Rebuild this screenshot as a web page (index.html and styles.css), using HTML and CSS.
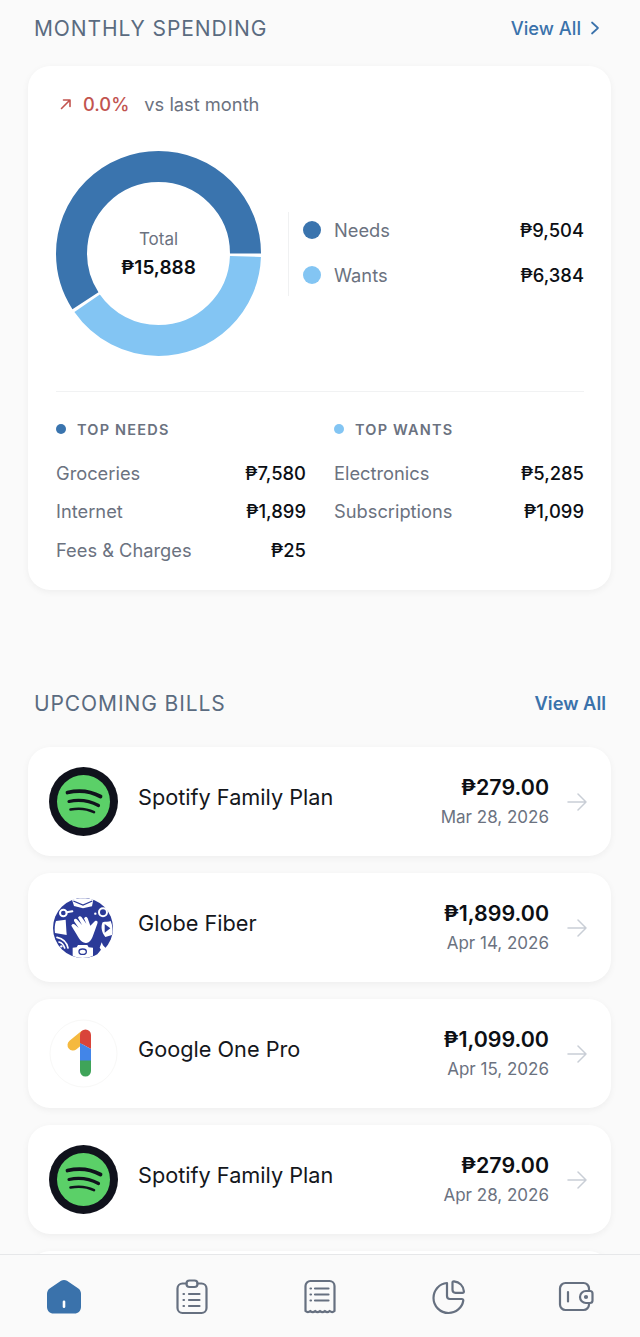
FILE: index.html
```html
<!DOCTYPE html>
<html lang="en">
<head>
  <meta charset="UTF-8">
  <meta name="viewport" content="width=device-width, initial-scale=1.0">
  <title>Dashboard</title>
  <link rel="stylesheet" href="styles.css">
</head>
<body>

<main class="page">
  <!-- Monthly spending -->
  <div class="section-head spending-head">
    <h2>MONTHLY SPENDING</h2>
    <a class="view-all" href="#">View All
      <svg class="chevron" viewBox="0 0 10 16" width="10" height="16"><path d="M2 2.5 8 8l-6 5.5" fill="none" stroke="#3a72ab" stroke-width="1.7" stroke-linecap="round" stroke-linejoin="round"/></svg>
    </a>
  </div>

  <section class="card spending-card">
    <div class="trend">
      <svg viewBox="0 0 14 14" width="14" height="14"><path d="M2.5 11.5 11 3M4.500 3H11v6.500" fill="none" stroke="#c2544f" stroke-width="1.6" stroke-linecap="round" stroke-linejoin="round"/></svg>
      <span class="trend-value">0.0%</span>
      <span class="trend-label">vs last month</span>
    </div>

    <div class="chart-row">
      <div class="donut">
        <!-- circumference 546.6, needs 59.8% / wants 40.2% -->
        <svg viewBox="0 0 205 205" width="205" height="205" fill="none" stroke-width="31">
          <circle cx="102.5" cy="102.5" r="87" stroke="#83c5f3" stroke-dasharray="217 329.6" stroke-dashoffset="-3"/>
          <circle cx="102.5" cy="102.5" r="87" stroke="#3a74ae" stroke-dasharray="323.6 223" stroke-dashoffset="-223"/>
        </svg>
        <div class="donut-center">
          <span class="donut-label">Total</span>
          <strong class="donut-total">₱15,888</strong>
        </div>
      </div>

      <div class="legend">
        <div class="legend-item">
          <span class="dot dot-needs"></span>
          <span class="legend-name">Needs</span>
          <span class="amount">₱9,504</span>
        </div>
        <div class="legend-item">
          <span class="dot dot-wants"></span>
          <span class="legend-name">Wants</span>
          <span class="amount">₱6,384</span>
        </div>
      </div>
    </div>

    <hr class="divider">

    <div class="top-grid">
      <div>
        <h3 class="top-title"><span class="mini-dot dot-needs"></span>TOP NEEDS</h3>
        <div class="top-row"><span>Groceries</span><span class="amount">₱7,580</span></div>
        <div class="top-row"><span>Internet</span><span class="amount">₱1,899</span></div>
        <div class="top-row"><span>Fees &amp; Charges</span><span class="amount">₱25</span></div>
      </div>
      <div>
        <h3 class="top-title"><span class="mini-dot dot-wants"></span>TOP WANTS</h3>
        <div class="top-row"><span>Electronics</span><span class="amount">₱5,285</span></div>
        <div class="top-row"><span>Subscriptions</span><span class="amount">₱1,099</span></div>
      </div>
    </div>
  </section>

  <!-- Upcoming bills -->
  <div class="section-head bills-head">
    <h2>UPCOMING BILLS</h2>
    <a class="view-all view-all-bold" href="#">View All</a>
  </div>

  <div class="bill-list">
    <div class="card bill">
      <svg class="bill-logo" viewBox="0 0 69 69"><circle cx="34.5" cy="34.5" r="34.5" fill="#10121c"/><circle cx="34.5" cy="34.5" r="26.5" fill="#5bd068"/><g fill="none" stroke="#10121c" stroke-linecap="round"><path d="M18.5 25.5c11-2.5 23-1.5 33 4" stroke-width="3.8"/><path d="M20 34.500c9.500-2 20-1 29.500 4" stroke-width="3.2"/><path d="M21.500 42.500c8-1.500 16.500-.8 23.500 2.700" stroke-width="2.6"/></g></svg>
      <span class="bill-name">Spotify Family Plan</span>
      <div class="bill-info"><strong>₱279.00</strong><span>Mar 28, 2026</span></div>
      <svg class="bill-arrow" viewBox="0 0 20 20" width="20" height="20"><path d="M1 10h18M11 2l8 8-8 8" fill="none" stroke="#c9ced6" stroke-width="1.5" stroke-linecap="round" stroke-linejoin="round"/></svg>
    </div>

    <div class="card bill">
      <svg class="bill-logo" viewBox="3 0 207 207">
        <circle cx="105" cy="105" r="90" fill="#2b3a98"/>
        <!-- envelope -->
        <path d="M72 20c20-6 44-6 64 0l-4 20-27 6-27-7Z" fill="#fff"/>
        <path d="M76 24l29 12 28-12" fill="none" stroke="#2b3a98" stroke-width="4"/>
        <!-- key and speech bubble -->
        <circle cx="46" cy="60" r="10" fill="none" stroke="#fff" stroke-width="6"/>
        <path d="M56 58l17-3" stroke="#fff" stroke-width="6" stroke-linecap="round"/>
        <circle cx="165" cy="58" r="12" fill="none" stroke="#fff" stroke-width="6"/>
        <circle cx="142" cy="62" r="3.5" fill="#fff"/>
        <!-- left panel -->
        <path d="M24 84l29-4 3 46-35-6c-2-12-1-25 3-36Z" fill="#fff"/>
        <!-- hand -->
        <path d="M70 98c2-6 8-6 12-2l10 9-14-21c-1-8 6-8 10-4l14 16-12-22c4-6 8-5 11-1l14 19-7-16c4-6 8-6 11 0l8 22 14-14c8-2 9 3 7 8l-12 33c-7 23-18 25-23 25-16-2-22-18-26-24Z" fill="#fff"/>
        <!-- play button -->
        <path d="M164 88c8-3 18-1 24-4 6 14 7 28 4 42l-20 6c-12-14-14-32-8-44Z" fill="#fff"/>
        <path d="M170 93v26l17-13Z" fill="#2b3a98"/>
        <!-- wifi -->
        <path d="M27 133c15 3 29 14 33 32M33 147c8 2 14 8 17 18" fill="none" stroke="#fff" stroke-width="5" stroke-linecap="round"/>
        <circle cx="40" cy="160" r="3.5" fill="#fff"/>
        <!-- camera -->
        <path d="M74 164l12-1 4-7h28l4 7 13 1v24c-20 9-42 9-61 0Z" fill="#fff"/>
        <ellipse cx="104" cy="176" rx="11" ry="8" fill="none" stroke="#2b3a98" stroke-width="4"/>
        <!-- hanger -->
        <path d="M161 148l4 9 13 13-15 12-15 2 11-14-4-6Z" fill="#fff"/>
      </svg>
      <span class="bill-name">Globe Fiber</span>
      <div class="bill-info"><strong>₱1,899.00</strong><span>Apr 14, 2026</span></div>
      <svg class="bill-arrow" viewBox="0 0 20 20" width="20" height="20"><path d="M1 10h18M11 2l8 8-8 8" fill="none" stroke="#c9ced6" stroke-width="1.5" stroke-linecap="round" stroke-linejoin="round"/></svg>
    </div>

    <div class="card bill">
      <svg class="bill-logo" viewBox="0 0 69 69">
        <circle cx="34.5" cy="34.5" r="33.5" fill="#fff" stroke="#f8f8f7"/>
        <path d="M24 26 35 17" fill="none" stroke="#f5b93f" stroke-width="11" stroke-linecap="round"/>
        <path d="M31 16a5.5 5.5 0 0 1 11 0v14L31 24Z" fill="#d9443a"/>
        <path d="M31 24l11 6v12H31Z" fill="#4285e8"/>
        <path d="M31 41.5h11V52a5.5 5.5 0 0 1-11 0Z" fill="#3fa459"/>
      </svg>
      <span class="bill-name">Google One Pro</span>
      <div class="bill-info"><strong>₱1,099.00</strong><span>Apr 15, 2026</span></div>
      <svg class="bill-arrow" viewBox="0 0 20 20" width="20" height="20"><path d="M1 10h18M11 2l8 8-8 8" fill="none" stroke="#c9ced6" stroke-width="1.5" stroke-linecap="round" stroke-linejoin="round"/></svg>
    </div>

    <div class="card bill">
      <svg class="bill-logo" viewBox="0 0 69 69"><circle cx="34.5" cy="34.5" r="34.5" fill="#10121c"/><circle cx="34.5" cy="34.5" r="26.5" fill="#5bd068"/><g fill="none" stroke="#10121c" stroke-linecap="round"><path d="M18.5 25.5c11-2.5 23-1.5 33 4" stroke-width="3.8"/><path d="M20 34.500c9.500-2 20-1 29.500 4" stroke-width="3.2"/><path d="M21.500 42.500c8-1.500 16.500-.8 23.500 2.700" stroke-width="2.6"/></g></svg>
      <span class="bill-name">Spotify Family Plan</span>
      <div class="bill-info"><strong>₱279.00</strong><span>Apr 28, 2026</span></div>
      <svg class="bill-arrow" viewBox="0 0 20 20" width="20" height="20"><path d="M1 10h18M11 2l8 8-8 8" fill="none" stroke="#c9ced6" stroke-width="1.5" stroke-linecap="round" stroke-linejoin="round"/></svg>
    </div>

    <!-- next bill is cut off behind the nav -->
    <div class="card bill"></div>
  </div>
</main>

<nav class="bottom-nav">
  <a href="#">
    <svg viewBox="0 0 36 36" width="36" height="36"><path d="M15 1.800c1.800-1.200 4.200-1.200 6 0l11 7.400c2 1.300 3 3.300 3 5.600V28c0 3.800-2.800 6.500-6.500 6.500h-21C3.800 34.500 1 31.800 1 28V14.800c0-2.300 1-4.300 3-5.600Z" fill="#3a72ab"/><rect x="16.700" y="21.500" width="2.600" height="7.500" rx="1.300" fill="#fff"/></svg>
  </a>
  <a href="#">
    <svg viewBox="0 0 36 36" width="36" height="36" fill="none" stroke="#667080" stroke-width="2.2" stroke-linecap="round" stroke-linejoin="round"><path d="M12.500 4.500H8.500a5 5 0 0 0-5 5V29a5 5 0 0 0 5 5h19a5 5 0 0 0 5-5V9.500a5 5 0 0 0-5-5h-4"/><rect x="12.500" y="1.500" width="11" height="6.500" rx="3"/><path d="M15 15h10.500M15 21h10.500M15 27h10.500M9.500 15h.5M9.500 21h.5M9.500 27h.5"/></svg>
  </a>
  <a href="#">
    <svg viewBox="0 0 36 36" width="36" height="36" fill="none" stroke="#667080" stroke-width="2.2" stroke-linecap="round" stroke-linejoin="round"><path d="M3.500 32V7a5 5 0 0 1 5-5h19a5 5 0 0 1 5 5v25c-1.500 1.500-3 1.500-4.800 0-1.600 1.500-3.300 1.500-4.800 0-1.600 1.500-3.300 1.500-4.900 0-1.600 1.500-3.300 1.500-4.800 0-1.600 1.500-3.300 1.500-4.900 0-1.500 1.500-3.300 1.500-4.800 0Z"/><path d="M13 9.500h13.500M13 15.500h13.500M13 21.500h13.500M8.500 9.500h.5M8.500 15.500h.5M8.500 21.500h.5"/></svg>
  </a>
  <a href="#">
    <svg viewBox="0 0 36 36" width="36" height="36" fill="none" stroke="#667080" stroke-width="2.2" stroke-linecap="round" stroke-linejoin="round"><path d="M17 4C9.500 4.500 3.500 11 3.500 19c0 8.300 6.800 15 15 15 7.500 0 13.700-5.300 14.800-12.500.1-.9-.5-1.500-1.400-1.500H20a3 3 0 0 1-3-3Z"/><path d="M22.500 3.500c0-.8.600-1.300 1.400-1.200 5.500.6 9.500 4.500 10 10 .1.900-.5 1.500-1.300 1.500h-7.100a3 3 0 0 1-3-3Z"/></svg>
  </a>
  <a href="#">
    <svg viewBox="0 0 36 36" width="36" height="36" fill="none" stroke="#667080" stroke-width="2.2" stroke-linecap="round" stroke-linejoin="round"><path d="M31 12V9.500a5.500 5.500 0 0 0-5.500-5.500H7.500A5.500 5.500 0 0 0 2 9.500v16A5.500 5.500 0 0 0 7.500 31h18a5.500 5.500 0 0 0 5.500-5.500V24"/><path d="M28 12h4a2.500 2.500 0 0 1 2.500 2.500v7A2.500 2.500 0 0 1 32 24h-4a6 6 0 0 1 0-12Z"/><path d="M10 13v9.500"/><circle cx="28" cy="18" r="1" fill="#667080"/></svg>
  </a>
</nav>

</body>
</html>
```

FILE: styles.css
```css
/* General Styling */
* {
  box-sizing: border-box;
}

html, body {
  height: 1337px;
  overflow: hidden;
}

body {
  font-family: 'Inter', sans-serif;
  background-color: #fafafa;
  margin: 0;
  color: #6b7280;
}

.page {
  padding: 0 29px 0 28px;
}

/* Section headers */
.section-head {
  display: flex;
  justify-content: space-between;
  align-items: center;
  height: 24px;
  padding: 0 5px 0 6px;
}

.spending-head {
  margin-top: 16px;
  margin-bottom: 26px;
  padding-right: 11px;
}

.bills-head {
  margin-top: 101px;
  margin-bottom: 32px;
}

h2 {
  margin: 0;
  font-size: 21px;
  font-weight: 400;
  letter-spacing: 0.9px;
  color: #5a6b80;
}

.view-all {
  display: flex;
  align-items: center;
  gap: 9px;
  font-size: 18.3px;
  font-weight: 500;
  color: #3a72ab;
  text-decoration: none;
}

.view-all-bold {
  font-weight: 600;
}

/* Cards */
.card {
  background-color: white;
  border-radius: 22px;
  box-shadow: 0 2px 7px rgba(0, 0, 0, 0.05);
}

.spending-card {
  height: 524px;
  padding: 26px 27px 0 28px;
}

.trend {
  display: flex;
  align-items: center;
  height: 24px;
  font-size: 18.3px;
}

.trend svg {
  margin-left: 3px;
  margin-right: 10px;
}

.trend-value {
  color: #c2544f;
  font-weight: 500;
  margin-right: 15px;
}

.chart-row {
  display: flex;
  align-items: center;
  margin-top: 35px;
}

/* Donut */
.donut {
  position: relative;
  flex: none;
  width: 205px;
  height: 205px;
}

.donut svg {
  display: block;
}

.donut-center {
  position: absolute;
  inset: 0;
  display: flex;
  flex-direction: column;
  align-items: center;
  justify-content: center;
  gap: 6px;
}

.donut-label {
  font-size: 17px;
  line-height: 22px;
}

.donut-total {
  font-size: 19px;
  line-height: 24px;
  font-weight: 600;
  color: #0c0f14;
}

/* Legend */
.legend {
  flex: 1;
  margin-left: 27px;
  padding: 0 0 1px 14px;
  border-left: 1px solid #f0f1f2;
  display: flex;
  flex-direction: column;
  gap: 7px;
}

.legend-item {
  display: flex;
  align-items: center;
  height: 38px;
  padding-bottom: 1px;
  font-size: 18.3px;
}

.dot {
  width: 18px;
  height: 18px;
  border-radius: 50%;
  margin-right: 13px;
}

.dot-needs {
  background-color: #3a74ae;
}

.dot-wants {
  background-color: #83c5f3;
}

.legend-name {
  flex: 1;
}

.amount {
  font-size: 18.4px;
  font-weight: 500;
  color: #0c0f14;
}

.divider {
  border: 0;
  border-top: 1px solid #f1f2f3;
  margin: 35px 0 0;
}

/* Top needs and wants */
.top-grid {
  display: grid;
  grid-template-columns: 1fr 1fr;
  column-gap: 28px;
  padding-top: 26px;
}

.top-title {
  display: flex;
  align-items: center;
  height: 22px;
  margin: 0 0 14px;
  font-size: 14.5px;
  font-weight: 600;
  letter-spacing: 1.2px;
}

.mini-dot {
  width: 10px;
  height: 10px;
  border-radius: 50%;
  margin-right: 11px;
}

.top-row {
  display: flex;
  justify-content: space-between;
  align-items: center;
  height: 38.3px;
  font-size: 18.3px;
}

/* Bills */
.bill-list {
  display: flex;
  flex-direction: column;
  gap: 17px;
}

.bill {
  display: flex;
  align-items: center;
  flex: none;
  height: 109px;
  padding: 0 24px 0 21px;
}

.bill-logo {
  flex: none;
  width: 69px;
  height: 69px;
  margin-right: 20px;
}

.bill-name {
  flex: 1;
  padding-bottom: 9px;
  font-size: 21.7px;
  color: #14171c;
}

.bill-info {
  display: flex;
  flex-direction: column;
  align-items: flex-end;
  gap: 5px;
  margin-right: 18px;
}

.bill-info strong {
  font-size: 21.4px;
  line-height: 26px;
  font-weight: 600;
  color: #0c0f14;
}

.bill-info span {
  font-size: 17px;
  line-height: 24px;
}

.bill-arrow {
  flex: none;
}

/* Bottom navigation */
.bottom-nav {
  position: fixed;
  left: 0;
  right: 0;
  bottom: 0;
  height: 83px;
  display: grid;
  grid-template-columns: repeat(5, 1fr);
  padding-top: 24px;
  background-color: #fafafa;
  border-top: 1px solid #e6e7e9;
}

.bottom-nav a {
  display: flex;
  justify-content: center;
}
```
